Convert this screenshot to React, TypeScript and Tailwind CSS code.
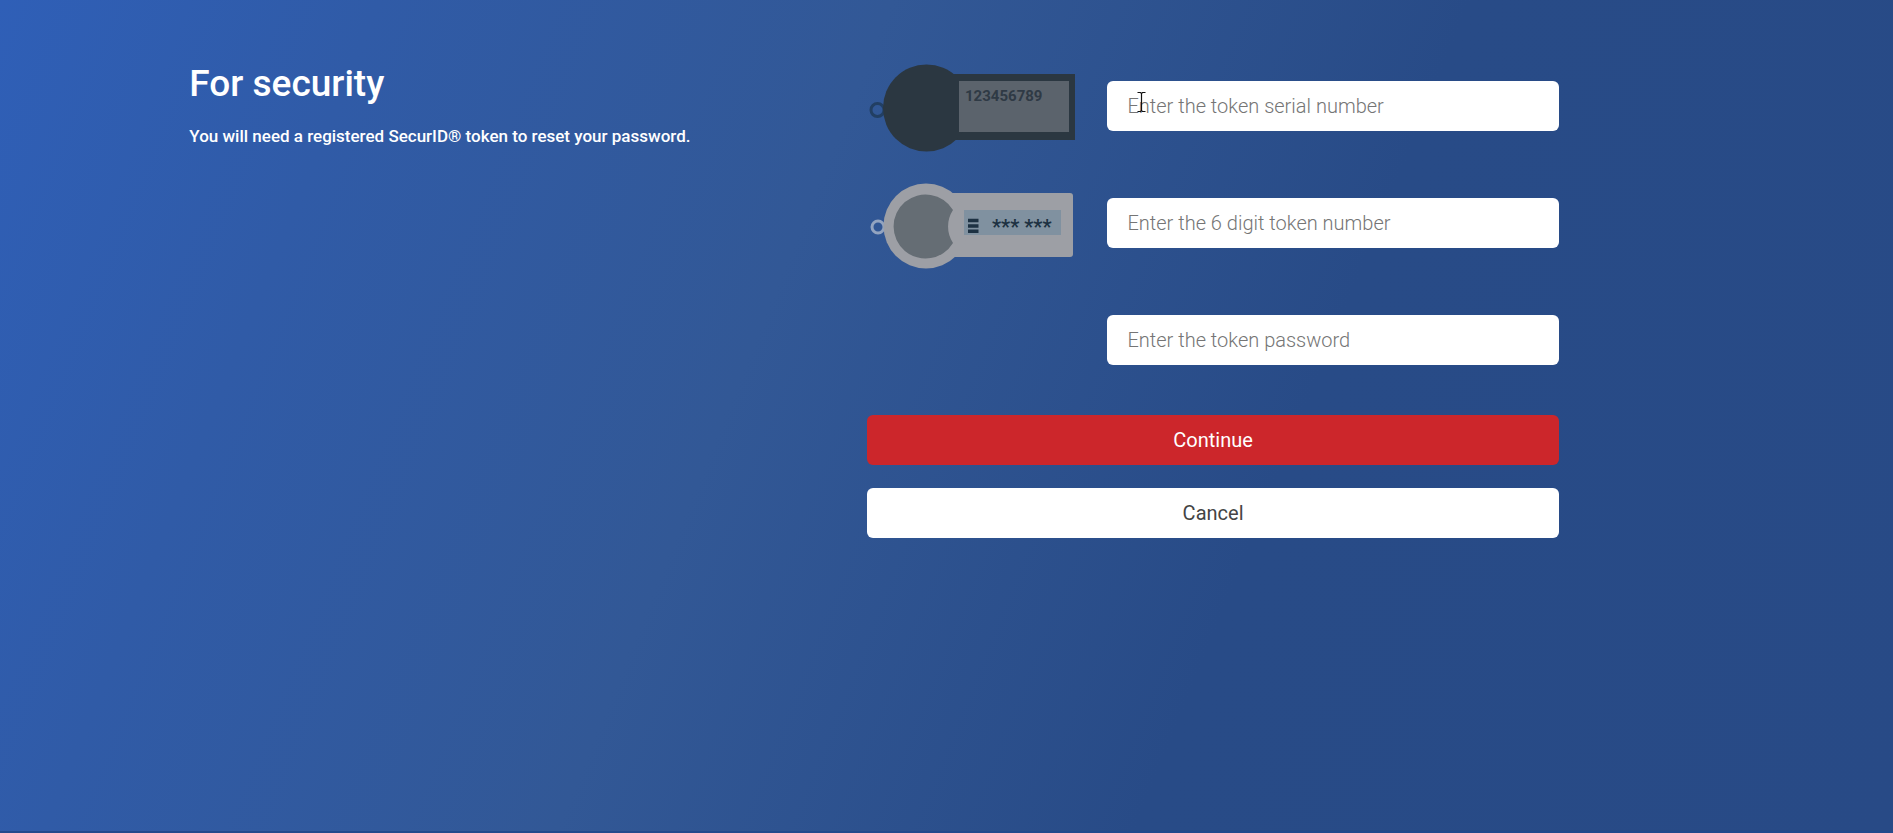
import type { ReactNode } from 'react';

type TokenField = {
  id: string;
  label: string;
  type: 'text' | 'password';
  picture?: ReactNode;
  showCursor?: boolean;
};

function TokenBack() {
  return (
    <svg width="210" height="92" viewBox="0 0 210 92" aria-hidden="true">
      <circle cx="10.5" cy="50" r="6.5" fill="none" stroke="#223f63" strokeWidth="3" />
      <rect x="83" y="14" width="125" height="66" fill="#2b3741" />
      <circle cx="59.5" cy="48" r="43.5" fill="#2b3741" />
      <rect x="92" y="21" width="110" height="51" fill="#5b636c" />
      <text x="98" y="41" fontSize="15" fontWeight="700" fill="#2f3a45">
        123456789
      </text>
    </svg>
  );
}

function TokenFront() {
  return (
    <svg width="210" height="92" viewBox="0 0 210 92" aria-hidden="true">
      <circle cx="11" cy="50" r="6" fill="none" stroke="#93a4c0" strokeWidth="3" />
      <rect x="80" y="16" width="126" height="64" rx="3" fill="#9d9fa5" />
      <circle cx="59" cy="49" r="42.5" fill="#9d9fa5" />
      <path d="M86 33 A32 32 0 1 0 86 66 A30 30 0 0 1 86 33 Z" fill="#656d74" />
      <rect x="97" y="33" width="97" height="25" fill="#8091a0" />
      <path d="M101 43.5h10.5M101 49h10.5M101 54.2h10.5" stroke="#1d3142" strokeWidth="3.6" />
      <text x="125" y="57" fontSize="20" fontWeight="700" fill="#1d3142">
        *** ***
      </text>
    </svg>
  );
}

function TextCursor() {
  return (
    <svg
      className="pointer-events-none absolute left-[30px] top-[10px]"
      width="9"
      height="22"
      viewBox="0 0 9 22"
      aria-hidden="true"
    >
      <path d="M0.5 1.5H3.5L4.5 2.5L5.5 1.5H8.5M4.5 2.5V19.5M0.5 20.5H3.5L4.5 19.5L5.5 20.5H8.5" fill="none" stroke="#111" strokeWidth="1.2" />
    </svg>
  );
}

const FIELDS: TokenField[] = [
  {
    id: 'serial-number',
    label: 'Enter the token serial number',
    type: 'text',
    picture: <TokenBack />,
    showCursor: true,
  },
  {
    id: 'token-number',
    label: 'Enter the 6 digit token number',
    type: 'text',
    picture: <TokenFront />,
  },
  {
    id: 'token-password',
    label: 'Enter the token password',
    type: 'password',
  },
];

export default function App() {
  return (
    <main className="min-h-screen border-b-2 border-[#234a8c] bg-[linear-gradient(112deg,#2f5fb7_0%,#305ba7_17%,#325896_40%,#284b87_66%,#284a86_100%)] px-[10%] pt-[60px] font-['Roboto',sans-serif]">
      <div className="grid grid-cols-[678fr_691fr_145fr]">
        <section className="text-white">
          <h1 className="text-[37px] font-medium leading-12">For security</h1>
          <p className="mt-4 text-[17px] font-medium leading-6">
            You will need a registered SecurID® token to reset your password.
          </p>
        </section>

        <form onSubmit={(e) => e.preventDefault()}>
          <div className="flex flex-col gap-[25px]">
            {FIELDS.map((field) => (
              <div key={field.id} className="grid min-h-[92px] grid-cols-[240px_minmax(0,1fr)] items-center">
                <div>{field.picture}</div>
                <div className="relative">
                  <input
                    id={field.id}
                    type={field.type}
                    aria-label={field.label}
                    placeholder={field.label}
                    className="block h-[50px] w-full rounded-md bg-white px-5 text-[20px] font-light text-[#333] placeholder:text-[#757575]"
                  />
                  {field.showCursor && <TextCursor />}
                </div>
              </div>
            ))}
          </div>

          <button type="submit" className="mt-[29px] h-[50px] w-full rounded-md bg-[#cc262b] text-[20px] text-white">
            Continue
          </button>
          <button type="button" className="mt-[23px] h-[50px] w-full rounded-md bg-white text-[20px] text-[#444]">
            Cancel
          </button>
        </form>
      </div>
    </main>
  );
}
